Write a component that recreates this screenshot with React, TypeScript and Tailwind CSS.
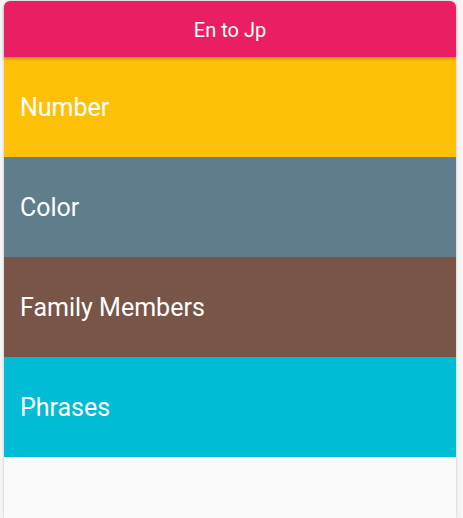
import React from "react";

interface ICategory {
  name: string;
  color: string;
}

const categories: ICategory[] = [
  { name: "Number", color: "bg-[#ffc107]" },
  { name: "Color", color: "bg-[#607d8b]" },
  { name: "Family Members", color: "bg-[#795548]" },
  { name: "Phrases", color: "bg-[#00bcd4]" },
];

const App = () => {
  return (
    <div
      className="w-full h-[518px] bg-[#f5f5f5] px-[4px] pt-[1px] overflow-hidden"
      style={{ fontFamily: "Roboto, 'Noto Sans', sans-serif" }}
    >
      <div className="w-[452px] h-full bg-[#fafafa] rounded-t-[6px] shadow-[0_0_3px_rgba(0,0,0,0.2)] flex flex-col">
        <div className="relative z-10 h-[56px] pt-[2px] bg-[#e91e63] rounded-t-[6px] flex items-center justify-center text-white text-[20px] shadow-[0_2px_3px_rgba(0,0,0,0.25)]">
          En to Jp
        </div>
        {categories.map((item, index) => (
          <div
            key={index}
            className={`h-[100px] pt-[2px] ${item.color} flex items-center pl-[16px] text-white text-[25px]`}
          >
            {item.name}
          </div>
        ))}
      </div>
    </div>
  );
};

export default App;
